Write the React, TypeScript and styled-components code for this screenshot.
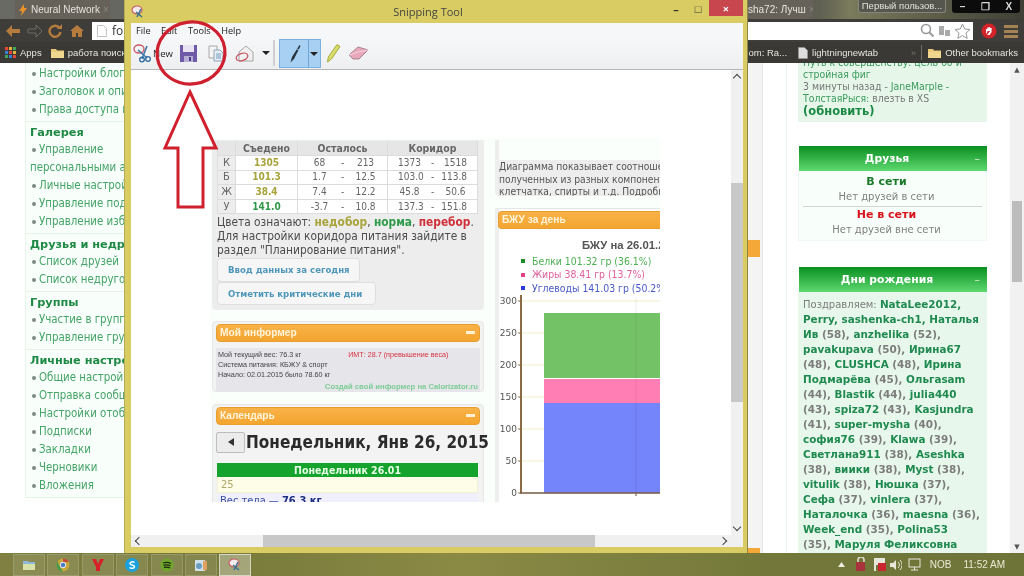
import React from "react";
import styled, { createGlobalStyle } from "styled-components";

const COND = `"DejaVu Sans Condensed", "DejaVu Sans", sans-serif`;

const Global = createGlobalStyle`
  html, body { margin: 0; padding: 0; background: #fff; }
  #root { width: 1024px; height: 576px; }
  * { box-sizing: border-box; }
`;

const Screen = styled.div`
  position: relative; width: 1024px; height: 576px; overflow: hidden; filter: blur(0.3px);
  display: flex; flex-direction: column; font-family: "DejaVu Sans", sans-serif; background: #fff;
`;

/* ---------- browser chrome ---------- */
const TabBar = styled.div`
  height: 19px; flex: none; display: flex; align-items: stretch;
  background: linear-gradient(90deg, #6a6a64 0, #55554f 70%, #5f6052 80%, #7a7a5c 83%, #3f3f36 100%);
  font-family: "Liberation Sans", sans-serif;
`;
const Tab = styled.div<{ $left: number; $width: number }>`
  margin-left: ${p => p.$left}px; width: ${p => p.$width}px; display: flex; align-items: center; gap: 3px;
  padding-left: 3px; background: #66625a; color: #e4e2da; font-size: 10px; white-space: nowrap; overflow: hidden;
  & > svg { flex: none; }
`;
const TabClose = styled.span` color: #8a887f; font-size: 10px; margin-left: auto; margin-right: 4px; `;
const TaskPreview = styled.div`
  margin-left: 45px; width: 88px; height: 13px; background: #55564e; border: 1px solid #85867c; border-top: 0;
  border-radius: 0 0 3px 3px; color: #e2e2da; font-size: 9.5px; line-height: 12px; text-align: center; white-space: nowrap;
`;
const WinButtons = styled.div`
  margin-left: 6px; width: 68px; height: 13px; background: #0c0c0c; border-radius: 0 0 3px 3px;
  display: flex; align-items: center; justify-content: space-around; color: #d8d8d8; font-size: 10px; font-weight: 700;
`;
const ChromeBar = styled.div`
  height: 23px; flex: none; display: flex; align-items: center; background: #3e3d39; padding-left: 5px;
`;
const NavSlot = styled.span` width: 21.5px; height: 16px; display: flex; align-items: center; justify-content: flex-start; `;
const Address = styled.div`
  margin-left: 1px; width: 881px; height: 18px; background: #fff; display: flex; align-items: center; padding: 0 2px 0 5px;
  font-family: "Open Sans", sans-serif; font-size: 12px; color: #333; gap: 5px;
`;
const AddressRight = styled.div` margin-left: auto; display: flex; align-items: center; gap: 2px; `;
const ChromeEnd = styled.div` margin-left: 4px; flex: 1; display: flex; align-items: center; justify-content: space-around; padding-right: 2px; `;
const BookmarkBar = styled.div`
  height: 21px; flex: none; display: flex; align-items: center; background: #3a3935; color: #e6e6e0;
  font-family: "Liberation Sans", sans-serif; font-size: 9.5px; padding: 0 6px 0 5px; white-space: nowrap;
`;
const Bookmark = styled.span<{ $gap?: number }>` display: flex; align-items: center; gap: 4px; margin-left: ${p => p.$gap ?? 0}px; `;
const BarSpacer = styled.span` flex: 1; `;
const BarDivider = styled.span` width: 1px; height: 15px; background: #6d6c66; margin: 0 6px 0 5px; `;
const Chevrons = styled.span` color: #77766f; font-size: 9px; margin-left: 33px; `;

/* ---------- page ---------- */
const Page = styled.div` height: 490px; flex: none; display: flex; overflow: hidden; background: #fff; `;
const LeftNav = styled.nav`
  margin-left: 25px; width: 200px; height: 435px; background: #f8fefa; border-left: 1px solid #e6f6ea;
  font-family: ${COND}; font-size: 11.4px; color: #3f9f60;
`;
const NavSection = styled.section<{ $first?: boolean }>`
  padding: ${p => (p.$first ? 1 : 3)}px 0 3px; border-bottom: 1px solid #e4f3e8; white-space: nowrap;
`;
const NavHeading = styled.h4`
  margin: 0 0 0 4px; height: 15px; line-height: 15px; font-family: "DejaVu Sans", sans-serif; font-size: 11.3px; font-weight: 700; color: #1f8a45;
`;
const NavLink = styled.div`
  height: 18px; line-height: 18px; padding-left: 13px; position: relative; color: #45a468;
  &::before { content: ""; position: absolute; left: 6px; top: 8px; width: 4px; height: 4px; border-radius: 50%; background: #7d8a82; }
`;
const NavPlain = styled.div` height: 18px; line-height: 18px; padding-left: 4px; color: #45a468; `;
const Center = styled.div` flex: 1; display: flex; justify-content: flex-end; `;
const CenterStrip = styled.div` width: 40px; height: 100%; background: #f4f4f4; border-right: 1px solid #e6e6e6; `;
const OrangeChip = styled.div<{ $top: number; $h: number }>`
  margin-top: ${p => p.$top}px; height: ${p => p.$h}px; background: #f4a838; margin-right: 2px;
`;
const RightNav = styled.aside`
  margin-left: 23px; width: 201px; border-left: 1px solid #e6f6ea; padding-left: 11px; flex: none;
  font-family: ${COND}; font-size: 10.4px; color: #808080;
`;
const NewsBox = styled.div`
  height: 59px; background: #e6f7ea; padding: 0 5px; color: #3a9a5c; line-height: 12px; white-space: nowrap; overflow: hidden; width: 189px;
`;
const NewsLine = styled.div` margin-top: -7px; `;
const Muted = styled.span` color: #777; `;
const Refresh = styled.div`
  font-family: "DejaVu Sans", sans-serif; font-size: 11.5px; font-weight: 700; color: #1c8a45; line-height: 15px;
`;
const WidgetHead = styled.div`
  height: 25px; width: 188px; background: linear-gradient(#0a8f20, #5ed870); color: #fff; font-weight: 700; font-size: 10.8px;
  font-family: "DejaVu Sans", sans-serif; display: flex; align-items: center; justify-content: center; position: relative; margin-left: 1px; padding-right: 12px;
  & > i { position: absolute; right: 7px; font-style: normal; font-weight: 400; color: #d5f5da; }
`;
const Widget = styled.div<{ $top: number }>` margin-top: ${p => p.$top}px; width: 189px; `;
const FriendsBody = styled.div`
  height: 70px; background: #f8fefa; border: 1px solid #eef8f0; border-top: 0; text-align: center; line-height: 15px; padding: 3px 12px 0 0; font-size: 11.1px;
`;
const FriendsHead = styled.div<{ $red?: boolean }>`
  font-family: "DejaVu Sans", sans-serif; font-size: 11px; font-weight: 700; color: ${p => (p.$red ? "#d8141c" : "#1a7a2a")};
`;
const FriendsRule = styled.div` height: 1px; background: #d0d6d2; margin: 2px -8px 0 4px; `;
const BirthdayBody = styled.div`
  height: 262px; background: #e8f7eb; padding: 5px 5px; font-family: "DejaVu Sans", sans-serif; font-size: 10.4px; line-height: 15px; font-weight: 700; color: #7c7c7c; white-space: nowrap;
`;
const Plain = styled.span` font-weight: 400; font-size: 10px; `;
const Nick = styled.span` color: #1f8a50; `;
const PageScroll = styled.div`
  width: 14px; margin-left: 23px; flex: none; background: #f1f1f1; display: flex; flex-direction: column; align-items: center;
  font-size: 7px; color: #555; padding-top: 3px; position: relative;
`;
const PageThumb = styled.div` width: 10px; height: 81px; background: #bcbcbc; margin-top: 127px; `;
const PageScrollDown = styled.div` margin-top: auto; padding-bottom: 2px; `;

/* ---------- taskbar ---------- */
const Taskbar = styled.div`
  height: 23px; flex: none; display: flex; align-items: center; color: #e9e9d4;
  background: linear-gradient(90deg, #7f8041, #76793a 20%, #8b8a45 45%, #73783a 75%, #6e7438);
  font-family: "Liberation Sans", sans-serif; font-size: 10px;
`;
const TaskGap = styled.div` width: 13px; `;
const TaskBtn = styled.div<{ $active?: boolean }>`
  width: 32px; height: 22px; margin-right: 2.4px; display: flex; align-items: center; justify-content: center;
  background: ${p => (p.$active ? "rgba(255,255,255,.32)" : "rgba(255,255,255,.1)")};
  border: 1px solid ${p => (p.$active ? "rgba(255,255,255,.55)" : "rgba(255,255,255,.14)")};
`;
const Tray = styled.div` margin-left: auto; display: flex; align-items: center; padding-right: 19px; white-space: nowrap; `;
const TrayIcon = styled.span<{ $gap: number }>` margin-left: ${p => p.$gap}px; display: flex; align-items: center; `;
const TrayText = styled.span<{ $gap: number }>` margin-left: ${p => p.$gap}px; `;

/* ---------- snipping tool window ---------- */
const SnipWindow = styled.div`
  position: absolute; left: 124px; top: 0; width: 624px; height: 553px; background: #d8cc62;
  border-right: 1px solid #8d8645; border-left: 1px solid #b4ab58; display: flex; flex-direction: column;
  font-family: "Open Sans", sans-serif; color: #222; z-index: 2;
`;
const SnipTitle = styled.div`
  height: 23px; flex: none; display: flex; align-items: center; position: relative; padding-left: 6px;
  font-size: 11px; color: #444;
`;
const SnipTitleText = styled.span` position: absolute; left: 0; right: 16px; text-align: center; `;
const SnipButtons = styled.div` position: absolute; right: 4px; top: 0; height: 16px; display: flex; align-items: stretch; `;
const SnipBtn = styled.div<{ $close?: boolean }>`
  width: ${p => (p.$close ? 34 : 22)}px; display: flex; align-items: center; justify-content: center;
  background: ${p => (p.$close ? "#c8474e" : "transparent")}; color: ${p => (p.$close ? "#fff" : "#333")}; font-size: 11px; font-weight: 700;
`;
const SnipInner = styled.div` margin: 0 4px 0 6px; padding-bottom: 6px; flex: 1; display: flex; flex-direction: column; min-height: 0; `;
const MenuBar = styled.div`
  height: 14px; flex: none; background: #f6f7f8; display: flex; align-items: center; font-size: 9.2px; padding-left: 5px; gap: 10.5px;
`;
const SnipToolbar = styled.div`
  height: 33px; flex: none; background: linear-gradient(#f6f7f8, #eeeff0); border-bottom: 1px solid #b6b6b6; display: flex; align-items: center;
  padding-left: 2px; font-size: 9.5px;
`;
const ToolSlot = styled.span<{ $left?: number }>` margin-left: ${p => p.$left ?? 0}px; display: flex; align-items: center; `;
const NewLabel = styled.span` margin-left: 1px; `;
const Caret = styled.span<{ $left?: number }>`
  margin-left: ${p => p.$left ?? 0}px; width: 0; height: 0; border-left: 4px solid transparent; border-right: 4px solid transparent; border-top: 4px solid #222;
`;
const ToolSep = styled.span` margin: 0 4px 0 3px; width: 2px; height: 26px; background: #cfcfcf; `;
const PenButton = styled.div`
  width: 42px; height: 29px; display: flex; background: #a8d0f2; border: 1px solid #7eb0de; margin-top: 1px;
`;
const PenMain = styled.div` flex: 1; display: flex; align-items: center; justify-content: center; border-right: 1px solid #6fa5d8; `;
const PenDrop = styled.div` width: 11px; display: flex; align-items: center; justify-content: center; `;

const SnipClient = styled.div` flex: 1; display: grid; grid-template-columns: 1fr 12px; grid-template-rows: 1fr 12px; min-height: 0; background: #fff; `;
const Canvas = styled.div` background: #fff; padding: 68px 0 0 79px; overflow: hidden; min-height: 0; `;
const VScroll = styled.div`
  background: #f0f0f0; display: flex; flex-direction: column; align-items: center; position: relative; padding-top: 113px;
`;
const VThumb = styled.div` width: 12px; height: 219px; background: #c8c8c8; flex: none; `;
const ArrowBtn = styled.span<{ $dir: "up" | "down" | "left" | "right" }>`
  position: absolute; width: 6px; height: 6px; border-left: 1.5px solid #444; border-top: 1.5px solid #444;
  ${p => p.$dir === "up" && "top:5px;left:3px;transform:rotate(45deg);"}
  ${p => p.$dir === "down" && "bottom:5px;left:3px;transform:rotate(225deg);"}
  ${p => p.$dir === "left" && "left:5px;top:3px;transform:rotate(-45deg);"}
  ${p => p.$dir === "right" && "right:5px;top:3px;transform:rotate(135deg);"}
`;
const HScroll = styled.div` background: #f0f0f0; display: flex; position: relative; padding-left: 132px; `;
const HThumb = styled.div` width: 332px; height: 12px; background: #c8c8c8; flex: none; `;
const ScrollCorner = styled.div` background: #f0f0f0; `;

/* ---------- captured page inside the snip ---------- */
const Capture = styled.div`
  width: 450px; height: 364px; display: flex; overflow: hidden; background: #fbfffc; color: #555; font-family: ${COND};
`;
const CapLeft = styled.div` margin-left: 2px; width: 272px; flex: none; `;
const CapRight = styled.div` margin-left: 11px; width: 165px; flex: none; overflow: hidden; `;
const GreyPanel = styled.div`
  margin-top: 2px; height: 170px; background: #ededed; border-radius: 0 0 4px 4px; padding: 1px 0 0 5px; font-size: 11.8px; line-height: 14px; color: #4c4c4c;
`;
const KcalTable = styled.table`
  border-collapse: collapse; table-layout: fixed; width: 260px; font-size: 10px; margin-bottom: 1px;
  td, th { padding: 0; height: 14.6px; line-height: 12px; border: 1px solid #dcdcdc; text-align: center; }
  th { background: #e6e6e6; color: #666; font-size: 10.4px; font-weight: 700; border-top: 0; }
  td { background: #fff; color: #666; }
`;
const RowLabel = styled.td` && { background: #ededed; color: #666; font-size: 11px; } `;
const Eaten = styled.td<{ $c: string }>` && { color: ${p => p.$c}; font-weight: 700; } `;
const RangeCell = styled.div` display: flex; padding: 0 10px; & > span { flex: 1; text-align: center; white-space: nowrap; } `;
const Note = styled.div` margin: 0; white-space: nowrap; `;
const Hl = styled.span<{ $c: string }>` color: ${p => p.$c}; font-weight: 700; `;
const CapButton = styled.div<{ $w: number }>`
  width: ${p => p.$w}px; height: 23.5px; background: #f6f6f6; border: 1px solid #dedede; border-radius: 4px;
  color: #4f97ba; font-size: 9.5px; font-weight: 700; display: flex; align-items: center; padding-left: 10px; white-space: nowrap;
`;
const ButtonStack = styled.div` margin-top: 1px; `;
const Card = styled.div<{ $top: number; $h: number }>`
  margin-top: ${p => p.$top}px; height: ${p => p.$h}px; background: #f3f3f3; border: 1px solid #e6e6e6; border-radius: 4px; padding: 2px 3px;
`;
const OrangeHead = styled.div`
  height: 17.5px; background: linear-gradient(#f9b248, #f3a52f); border: 1px solid #e99e30; border-radius: 4px; color: #fff4dc; font-size: 10.2px; font-weight: 700;
  font-family: "Liberation Sans", sans-serif; display: flex; align-items: center; justify-content: space-between; padding: 0 3px; white-space: nowrap;
`;
const Minus = styled.span` width: 9px; height: 3px; background: #fff1d6; margin-right: 1px; `;
const InfoBox = styled.div`
  margin-top: 6px; height: 44px; background: #e6e6ea; padding: 2px 2px; font-family: "Liberation Sans", sans-serif; font-size: 7.2px; line-height: 10.3px; color: #444; white-space: nowrap;
`;
const InfoRow = styled.div` display: flex; `;
const InfoRed = styled.span` margin-left: 47px; color: #d83040; `;
const InfoLink = styled.div` text-align: right; color: #7ccb96; font-weight: 700; font-size: 7.7px; margin-top: 2px; `;
const DayRow = styled.div` margin-top: 7px; display: flex; align-items: center; white-space: nowrap; height: 21px; `;
const PrevBtn = styled.div`
  width: 29px; height: 21px; flex: none; background: #ececec; border: 1px solid #bdbdbd; border-radius: 2px; display: flex; align-items: center; justify-content: center;
  &::before { content: ""; border: 4px solid transparent; border-right: 6px solid #333; border-left: 0; }
`;
const DayTitle = styled.span` margin-left: 1px; font-size: 17px; font-weight: 700; color: #2b2b2b; `;
const DayBanner = styled.div`
  margin: 10px 2px 0 1px; height: 14px; background: #14a32c; color: #e6ffe6; text-align: center; font-size: 10.5px; font-weight: 700; line-height: 14px;
`;
const DayCell = styled.div`
  margin: 0 2px 0 1px; height: 16px; background: #fefee8; color: #a9a86a; font-size: 11px; line-height: 16px; padding-left: 3px; border: 1px solid #f2f2d0; border-top: 0;
`;
const WeightRow = styled.div` margin: 0 2px 0 1px; height: 16px; background: #eff0fb; color: #3c4fa8; font-size: 11px; line-height: 15px; padding-left: 3px; & > b { color: #1e2e80; } `;
const TextPanel = styled.div`
  margin-top: 2px; height: 56px; background: linear-gradient(#fbfffc 0, #fbfffc 20px, #ededed 20px); border-left: 4px solid #eee;
  font-size: 10.2px; line-height: 12.5px; color: #555; padding-top: 21px; white-space: nowrap; overflow: hidden; border-radius: 0 0 0 4px;
`;
const ChartCard = styled.div`
  margin-top: 12px; height: 294px; background: #fff; border-left: 4px solid #eee; border-top: 1px solid #e6e6e6;
`;
const ChartHead = styled(OrangeHead)` margin: 2px 0 0 -1px; border-radius: 4px 0 0 4px; border-right: 0; justify-content: flex-start; `;
const ChartTitle = styled.div`
  margin: 9px 0 0 83px; font-family: "Liberation Sans", sans-serif; font-size: 11.3px; font-weight: 700; color: #555; white-space: nowrap; line-height: 14px;
`;
const Legend = styled.div` margin: 3px 0 0 22px; font-size: 10.4px; line-height: 13.5px; white-space: nowrap; `;
const LegendRow = styled.div<{ $c: string }>` color: ${p => p.$c}; display: flex; align-items: center; `;
const LegendDot = styled.span<{ $c: string }>` flex: none; width: 4px; height: 4px; background: ${p => p.$c}; margin-right: 7px; `;
const ChartSvg = styled.svg` display: block; font-family: "DejaVu Sans", sans-serif; `;

const Annotation = styled.svg` position: absolute; left: 0; top: 0; z-index: 3; pointer-events: none; `;

/* ---------- icons ---------- */
const Svg: React.FC<{ w: number; h?: number; vb?: string; children: React.ReactNode }> = ({ w, h, vb, children }) => (
  <svg width={w} height={h ?? w} viewBox={vb ?? `0 0 ${w} ${h ?? w}`}>{children}</svg>
);
const Folder = () => (
  <Svg w={13} h={11}><path d="M0 2h5l1 1.5h7V11H0z" fill="#e9c877" /><path d="M0 4.5h13V11H0z" fill="#f0d78f" /></Svg>
);
const Doc = ({ c = "#ddd" }: { c?: string }) => (
  <Svg w={10} h={12}><path d="M.5.5h6l3 3v8h-9z" fill={c} stroke="#999" strokeWidth=".6" /></Svg>
);
const Scissors = () => (
  <Svg w={19} h={20}>
    <ellipse cx="6" cy="6" rx="5" ry="4" fill="none" stroke="#cc5a66" strokeWidth="1.4" />
    <path d="M5 7l9 8M14 3L9 16" stroke="#3f78a8" strokeWidth="1.6" />
    <circle cx="9" cy="16.5" r="2.3" fill="none" stroke="#2d6a9f" strokeWidth="1.3" />
    <circle cx="15" cy="16" r="2.3" fill="none" stroke="#2d6a9f" strokeWidth="1.3" />
  </Svg>
);
const SaveIcon = () => (
  <Svg w={19} h={19}>
    <path d="M1 1h17v17H1z" fill="#6f5aa8" />
    <path d="M4 1h11v7H4z" fill="#e8e4f2" />
    <path d="M5 12h9v6H5z" fill="#b9aed6" />
    <path d="M10 13h2v4h-2z" fill="#4c3d86" />
  </Svg>
);
const CopyIcon = () => (
  <Svg w={16} h={17}>
    <path d="M1 1h8v12H1z" fill="#f4f4f4" stroke="#a8a8a8" />
    <path d="M6 5h6l3 3v8H6z" fill="#e9eef4" stroke="#8ea4ba" />
    <path d="M8 9h5M8 11h5M8 13h5" stroke="#6e9cc2" />
  </Svg>
);
const SendIcon = () => (
  <Svg w={19} h={17}>
    <path d="M4 7l7-6 7 6v9H4z" fill="#f1f1f1" stroke="#a5a5a5" />
    <ellipse cx="7" cy="12" rx="6" ry="3.6" fill="none" stroke="#c9505c" strokeWidth="1.3" transform="rotate(-18 7 12)" />
  </Svg>
);
const PenIcon = () => (
  <Svg w={14} h={20}><path d="M12.5 1L5 13l-1.5 5.5L7 15 13.5 2z" fill="#26333f" /><path d="M10 5l2 1" stroke="#8fb8d8" /></Svg>
);
const Pencil = () => (
  <Svg w={15} h={20}><path d="M11 1.5l3 2L5.5 16 1.5 19l.8-5z" fill="#d8dc6a" stroke="#a7ab3c" /></Svg>
);
const Eraser = () => (
  <Svg w={21} h={15}><path d="M1 9l9-8 10 3-9 9H5z" fill="#e8a8bc" stroke="#a8838f" /><path d="M1 9l9-3 10-2" stroke="#f5d5df" fill="none" /></Svg>
);
const SnipLogo = () => (
  <Svg w={14} h={14}>
    <ellipse cx="6" cy="5" rx="5" ry="4" fill="#f6eaea" stroke="#c65c66" strokeWidth="1.2" />
    <path d="M5 7l6 5M10 4L6 12" stroke="#35708f" strokeWidth="1.5" />
  </Svg>
);
const GridApps = () => (
  <Svg w={11} h={11}>
    {[0, 4, 8].flatMap(y => [0, 4, 8].map(x => (
      <rect key={`${x}${y}`} x={x} y={y} width="3" height="3"
        fill={["#e5483a", "#e8b13a", "#3fa85a", "#3d7fd8", "#e5483a", "#e8b13a", "#3fa85a", "#3d7fd8", "#e5483a"][(x + y * 3) / 4]} />
    )))}
  </Svg>
);

const leftNav: { heading?: string; items: { t: string; plain?: boolean }[] }[] = [
  { items: [{ t: "Настройки блога" }, { t: "Заголовок и описание" }, { t: "Права доступа к блогу" }] },
  { heading: "Галерея", items: [{ t: "Управление" }, { t: "персональными альбомами", plain: true }, { t: "Личные настройки" }, { t: "Управление подписками" }, { t: "Управление избранным" }] },
  { heading: "Друзья и недруги", items: [{ t: "Список друзей" }, { t: "Список недругов" }] },
  { heading: "Группы", items: [{ t: "Участие в группах" }, { t: "Управление группами" }] },
  { heading: "Личные настройки", items: [{ t: "Общие настройки" }, { t: "Отправка сообщений" }, { t: "Настройки отображения" }, { t: "Подписки" }, { t: "Закладки" }, { t: "Черновики" }, { t: "Вложения" }] },
];

/* n = nick, t = grey text */
const birthdays: [string, string][][] = [
  [["t", "Поздравляем: "], ["n", "NataLee2012,"]],
  [["n", "Perry, sashenka-ch1, Наталья"]],
  [["n", "Ив"], ["t", " (58), "], ["n", "anzhelika"], ["t", " (52),"]],
  [["n", "pavakupava"], ["t", " (50), "], ["n", "Ирина67"]],
  [["t", "(48), "], ["n", "CLUSHCA"], ["t", " (48), "], ["n", "Ирина"]],
  [["n", "Подмарёва"], ["t", " (45), "], ["n", "Ольгasam"]],
  [["t", "(44), "], ["n", "Blastik"], ["t", " (44), "], ["n", "julia440"]],
  [["t", "(43), "], ["n", "spiza72"], ["t", " (43), "], ["n", "Kasjundra"]],
  [["t", "(41), "], ["n", "super-mysha"], ["t", " (40),"]],
  [["n", "софия76"], ["t", " (39), "], ["n", "Klawa"], ["t", " (39),"]],
  [["n", "Светлана911"], ["t", " (38), "], ["n", "Aseshka"]],
  [["t", "(38), "], ["n", "виики"], ["t", " (38), "], ["n", "Myst"], ["t", " (38),"]],
  [["n", "vitulik"], ["t", " (38), "], ["n", "Нюшка"], ["t", " (37),"]],
  [["n", "Сефа"], ["t", " (37), "], ["n", "vinlera"], ["t", " (37),"]],
  [["n", "Наталочка"], ["t", " (36), "], ["n", "maesna"], ["t", " (36),"]],
  [["n", "Week_end"], ["t", " (35), "], ["n", "Polina53"]],
  [["t", "(35), "], ["n", "Маруля Феликсовна"]],
];

const kcalRows = [
  { l: "К", e: "1305", c: "#a8a33a", r: ["68", "-", "213"], k: ["1373", "-", "1518"] },
  { l: "Б", e: "101.3", c: "#a8a33a", r: ["1.7", "-", "12.5"], k: ["103.0", "-", "113.8"] },
  { l: "Ж", e: "38.4", c: "#a8a33a", r: ["7.4", "-", "12.2"], k: ["45.8", "-", "50.6"] },
  { l: "У", e: "141.0", c: "#2f9a4a", r: ["-3.7", "-", "10.8"], k: ["137.3", "-", "151.8"] },
];

const ticks = [300, 250, 200, 150, 100, 50, 0];

export default function App() {
  return (
    <Screen>
      <Global />
      <TabBar>
        <Tab $left={15} $width={95}>
          <Svg w={10} h={12}><path d="M6 0L1 7h3l-1 5 6-8H6z" fill="#e8922a" /></Svg>
          Neural Network
          <TabClose>×</TabClose>
        </Tab>
        <Tab $left={635} $width={68}>sha72: Лучш<TabClose>×</TabClose></Tab>
        <TaskPreview>Первый пользов...</TaskPreview>
        <WinButtons><span>–</span><span>❐</span><span>X</span></WinButtons>
      </TabBar>
      <ChromeBar>
        <NavSlot><Svg w={16} h={14}><path d="M1 7l6-6v4h8v4H7v4z" fill="#b57c3e" /></Svg></NavSlot>
        <NavSlot><Svg w={16} h={14}><path d="M15 7L9 1v4H1v4h8v4z" fill="none" stroke="#6d6c66" /></Svg></NavSlot>
        <NavSlot><Svg w={14} h={14}><path d="M11.5 4A5.5 5.5 0 1 0 12.5 8" fill="none" stroke="#b57c3e" strokeWidth="2.4" /><path d="M9 5h5V0z" fill="#b57c3e" /></Svg></NavSlot>
        <NavSlot><Svg w={14} h={14}><path d="M7 1L0 7h2v6h4V9h2v4h4V7h2z" fill="#b57c3e" /></Svg></NavSlot>
        <Address>
          <Doc c="#fff" />
          <span>for</span>
          <AddressRight>
            <Svg w={15} h={15}><circle cx="6" cy="6" r="4.5" fill="none" stroke="#999" strokeWidth="1.6" /><path d="M9.5 9.5l4 4" stroke="#999" strokeWidth="2" /></Svg>
            <Svg w={15} h={14}><path d="M2 2h5v9H2zM8 6h5v6H8z" fill="#aaa" /></Svg>
            <Svg w={17} h={16}><path d="M8.5 1l2.2 5 5.3.5-4 3.6 1.2 5.3-4.7-2.8-4.7 2.8L5 10.1 1 6.5 6.3 6z" fill="#fff" stroke="#9a9a9a" /></Svg>
          </AddressRight>
        </Address>
        <ChromeEnd>
          <Svg w={16} h={16}><circle cx="8" cy="8" r="7.5" fill="#d2232a" /><path d="M5 11V6h1.4v3M6.4 8V4.6h1.4V8M7.8 8V4.2h1.4V8M9.2 8V5h1.4v4l-2 3H6z" fill="#fff" /></Svg>
          <Svg w={14} h={14}><path d="M0 1h14v3H0zM0 6h14v3H0zM0 11h14v3H0z" fill="#a58252" /></Svg>
        </ChromeEnd>
      </ChromeBar>
      <BookmarkBar>
        <Bookmark><GridApps /> Apps</Bookmark>
        <Bookmark $gap={9}><Folder /> работа поиск</Bookmark>
        <BarSpacer />
        <Bookmark>com: Ra...</Bookmark>
        <Bookmark $gap={11}><Doc /> lightningnewtab</Bookmark>
        <Chevrons>»</Chevrons>
        <BarDivider />
        <Bookmark><Folder /> Other bookmarks</Bookmark>
      </BookmarkBar>

      <Page>
        <LeftNav>
          {leftNav.map((s, i) => (
            <NavSection key={i} $first={i === 0}>
              {s.heading && <NavHeading>{s.heading}</NavHeading>}
              {s.items.map(it => (it.plain ? <NavPlain key={it.t}>{it.t}</NavPlain> : <NavLink key={it.t}>{it.t}</NavLink>))}
            </NavSection>
          ))}
        </LeftNav>
        <Center>
          <CenterStrip>
            <OrangeChip $top={177} $h={17} />
            <OrangeChip $top={291} $h={6} />
          </CenterStrip>
        </Center>
        <RightNav>
          <NewsBox>
            <NewsLine>Путь к совершенству: цель 60 и</NewsLine>
            <div>стройная фиг</div>
            <div><Muted>3 минуты назад - </Muted>JaneMarple -</div>
            <div>ТолстаяРыся: <Muted>влезть в XS</Muted></div>
            <Refresh>(обновить)</Refresh>
          </NewsBox>
          <Widget $top={24}>
            <WidgetHead>Друзья<i>–</i></WidgetHead>
            <FriendsBody>
              <FriendsHead>В сети</FriendsHead>
              <div>Нет друзей в сети</div>
              <FriendsRule />
              <FriendsHead $red>Не в сети</FriendsHead>
              <div>Нет друзей вне сети</div>
            </FriendsBody>
          </Widget>
          <Widget $top={26}>
            <WidgetHead>Дни рождения<i>–</i></WidgetHead>
            <BirthdayBody>
              {birthdays.map((line, i) => (
                <div key={i}>
                  {line.map(([k, t], j) =>
                    k === "n" ? <Nick key={j}>{t}</Nick> : i === 0 ? <Plain key={j}>{t}</Plain> : <span key={j}>{t}</span>
                  )}
                </div>
              ))}
            </BirthdayBody>
          </Widget>
        </RightNav>
        <PageScroll>
          ▲
          <PageThumb />
          <PageScrollDown>▼</PageScrollDown>
        </PageScroll>
      </Page>

      <Taskbar>
        <TaskGap />
        <TaskBtn>
          <Svg w={14} h={12}><path d="M1 2h5l1 1h6v8H1z" fill="#8fb7d8" /><path d="M1 5h12v6H1z" fill="#d9e2a8" /></Svg>
        </TaskBtn>
        <TaskBtn>
          <Svg w={14} h={14}><circle cx="7" cy="7" r="6.5" fill="#c8a83a" /><path d="M7 .5A6.5 6.5 0 0 1 12.8 4H7z" fill="#c94a3a" /><path d="M1.5 3.5L4 9l3 4.5a6.5 6.5 0 0 1-5.5-10z" fill="#4a9a4a" /><circle cx="7" cy="7" r="2.8" fill="#4a80c8" stroke="#eee" /></Svg>
        </TaskBtn>
        <TaskBtn>
          <Svg w={14} h={14}><path d="M1 1h4l2 5 2-5h4L9 9v4H5V9z" fill="#d8202a" /></Svg>
        </TaskBtn>
        <TaskBtn>
          <Svg w={14} h={14}><circle cx="7" cy="7" r="7" fill="#1aa0dc" /><path d="M9.5 4.5C8 3.4 5 3.7 5 5.4 5 7.4 9.5 6.6 9.5 8.8 9.5 10.5 6.2 10.8 4.5 9.5" fill="none" stroke="#fff" strokeWidth="1.5" /></Svg>
        </TaskBtn>
        <TaskBtn>
          <Svg w={14} h={14}><circle cx="7" cy="7" r="6.5" fill="#6fa82a" /><path d="M3 5c3-1 6-.6 8 .5M3.5 7.3c2.6-.7 5-.4 7 .5M4 9.5c2-.5 4.3-.3 6 .5" fill="none" stroke="#1e2a10" strokeWidth="1.3" /></Svg>
        </TaskBtn>
        <TaskBtn>
          <Svg w={14} h={14}><rect x="1" y="2" width="10" height="11" fill="#cfe0e8" /><circle cx="5" cy="8" r="3" fill="#6a9ec0" /><path d="M9 3h4v9H9z" fill="#e0a060" /></Svg>
        </TaskBtn>
        <TaskBtn $active><SnipLogo /></TaskBtn>
        <Tray>
          <TrayIcon $gap={0}><Svg w={7} h={5}><path d="M3.5 0L7 5H0z" fill="#efefe0" /></Svg></TrayIcon>
          <TrayIcon $gap={10}><Svg w={13} h={15}><rect x="1" y="5" width="9" height="9" fill="#a8333a" /><path d="M3 5V3a3 3 0 0 1 6 0v2" fill="none" stroke="#dcdcc8" strokeWidth="1.6" /></Svg></TrayIcon>
          <TrayIcon $gap={5}><Svg w={13} h={15}><path d="M1 1v13h2V8h9V1z" fill="#e6e6da" /><rect x="5" y="6" width="8" height="8" fill="#c9272d" /></Svg></TrayIcon>
          <TrayIcon $gap={3}><Svg w={13} h={12}><path d="M1 4h3l3-3v10L4 8H1z" fill="#e6e6da" /><path d="M9 3a4 4 0 0 1 0 6M11 1a7 7 0 0 1 0 10" fill="none" stroke="#e6e6da" /></Svg></TrayIcon>
          <TrayIcon $gap={6}><Svg w={13} h={13}><rect x="1" y="1" width="11" height="8" fill="none" stroke="#e6e6da" /><path d="M6.5 9v3M3 12h7" stroke="#e6e6da" /></Svg></TrayIcon>
          <TrayText $gap={9}>NOB</TrayText>
          <TrayText $gap={12}>11:52 AM</TrayText>
        </Tray>
      </Taskbar>

      <SnipWindow>
        <SnipTitle>
          <SnipLogo />
          <SnipTitleText>Snipping Tool</SnipTitleText>
          <SnipButtons>
            <SnipBtn>–</SnipBtn>
            <SnipBtn>□</SnipBtn>
            <SnipBtn $close>×</SnipBtn>
          </SnipButtons>
        </SnipTitle>
        <SnipInner>
          <MenuBar>
            <span>File</span><span>Edit</span><span>Tools</span><span>Help</span>
          </MenuBar>
          <SnipToolbar>
            <ToolSlot><Scissors /></ToolSlot>
            <NewLabel>New</NewLabel>
            <ToolSlot $left={6}><SaveIcon /></ToolSlot>
            <ToolSlot $left={10}><CopyIcon /></ToolSlot>
            <ToolSlot $left={11}><SendIcon /></ToolSlot>
            <Caret $left={8} />
            <ToolSep />
            <PenButton>
              <PenMain><PenIcon /></PenMain>
              <PenDrop><Caret /></PenDrop>
            </PenButton>
            <ToolSlot $left={5}><Pencil /></ToolSlot>
            <ToolSlot $left={7}><Eraser /></ToolSlot>
          </SnipToolbar>
          <SnipClient>
            <Canvas>
              <Capture>
                <CapLeft>
                  <GreyPanel>
                    <KcalTable>
                      <colgroup><col width="18" /><col width="62" /><col width="90" /><col width="90" /></colgroup>
                      <thead><tr><th /><th>Съедено</th><th>Осталось</th><th>Коридор</th></tr></thead>
                      <tbody>
                        {kcalRows.map(r => (
                          <tr key={r.l}>
                            <RowLabel>{r.l}</RowLabel>
                            <Eaten $c={r.c}>{r.e}</Eaten>
                            <td><RangeCell>{r.r.map((v, i) => <span key={i}>{v}</span>)}</RangeCell></td>
                            <td><RangeCell>{r.k.map((v, i) => <span key={i}>{v}</span>)}</RangeCell></td>
                          </tr>
                        ))}
                      </tbody>
                    </KcalTable>
                    <Note>Цвета означают: <Hl $c="#a8a33a">недобор</Hl>, <Hl $c="#2f9a4a">норма</Hl>, <Hl $c="#d0303a">перебор</Hl>.</Note>
                    <Note>Для настройки коридора питания зайдите в</Note>
                    <Note>раздел "Планирование питания".</Note>
                    <ButtonStack>
                      <CapButton $w={143}>Ввод данных за сегодня</CapButton>
                      <CapButton $w={159}>Отметить критические дни</CapButton>
                    </ButtonStack>
                  </GreyPanel>
                  <Card $top={11} $h={71}>
                    <OrangeHead>Мой информер<Minus /></OrangeHead>
                    <InfoBox>
                      <InfoRow>Мой текущий вес: 76.3 кг<InfoRed>ИМТ: 28.7 (превышение веса)</InfoRed></InfoRow>
                      <div>Система питания: КБЖУ &amp; спорт</div>
                      <div>Начало: 02.01.2015 было 78.60 кг</div>
                      <InfoLink>Создай свой информер на Calorizator.ru</InfoLink>
                    </InfoBox>
                  </Card>
                  <Card $top={12} $h={120}>
                    <OrangeHead>Календарь<Minus /></OrangeHead>
                    <DayRow><PrevBtn /><DayTitle>Понедельник, Янв 26, 2015</DayTitle></DayRow>
                    <DayBanner>Понедельник 26.01</DayBanner>
                    <DayCell>25</DayCell>
                    <WeightRow>Вес тела — <b>76.3 кг.</b></WeightRow>
                  </Card>
                </CapLeft>
                <CapRight>
                  <TextPanel>
                    <div>Диаграмма показывает соотношение</div>
                    <div>полученных из разных компонентов</div>
                    <div>клетчатка, спирты и т.д. Подробнее</div>
                  </TextPanel>
                  <ChartCard>
                    <ChartHead>БЖУ за день</ChartHead>
                    <ChartTitle>БЖУ на 26.01.2015</ChartTitle>
                    <Legend>
                      <LegendRow $c="#4caf50"><LegendDot $c="#1f8a2a" />Белки 101.32 гр (36.1%)</LegendRow>
                      <LegendRow $c="#e0609c"><LegendDot $c="#e0408c" />Жиры 38.41 гр (13.7%)</LegendRow>
                      <LegendRow $c="#4a5ac8"><LegendDot $c="#2a3ad8" />Углеводы 141.03 гр (50.2%)</LegendRow>
                    </Legend>
                    <ChartSvg width={161} height={205} viewBox="0 0 161 205">
                      {ticks.map((t, i) => (
                        <g key={t}>
                          <line x1="22" x2="161" y1={6 + i * 32} y2={6 + i * 32} stroke="#f3eccb" />
                          <line x1="19" x2="22" y1={6 + i * 32} y2={6 + i * 32} stroke="#8a6a44" />
                          <text x="18" y={9 + i * 32} fontSize="9" fill="#555" textAnchor="end">{t}</text>
                        </g>
                      ))}
                      <rect x="45" y="18" width="116" height="65" fill="#74c266" />
                      <rect x="45" y="84" width="116" height="24" fill="#ff7fb4" />
                      <rect x="45" y="108" width="116" height="90" fill="#7484fb" />
                      <line x1="137" x2="137" y1="2" y2="201" stroke="#000" strokeOpacity=".07" />
                      <line x1="22" x2="22" y1="0" y2="198" stroke="#8b6a44" strokeWidth="2" />
                      <line x1="21" x2="161" y1="198" y2="198" stroke="#7a5a48" strokeWidth="1.4" />
                      <line x1="137" x2="137" y1="198" y2="201" stroke="#7a5a48" />
                    </ChartSvg>
                  </ChartCard>
                </CapRight>
              </Capture>
            </Canvas>
            <VScroll><ArrowBtn $dir="up" /><VThumb /><ArrowBtn $dir="down" /></VScroll>
            <HScroll><ArrowBtn $dir="left" /><HThumb /><ArrowBtn $dir="right" /></HScroll>
            <ScrollCorner />
          </SnipClient>
        </SnipInner>
      </SnipWindow>

      <Annotation width={1024} height={576} viewBox="0 0 1024 576">
        <ellipse cx="191" cy="53" rx="34" ry="31" fill="none" stroke="#cf2030" strokeWidth="3.2" transform="rotate(-8 191 53)" />
        <path d="M190 92L216 148H203V207H178V148H165Z" fill="none" stroke="#d0202e" strokeWidth="3" strokeLinejoin="miter" />
      </Annotation>
    </Screen>
  );
}
